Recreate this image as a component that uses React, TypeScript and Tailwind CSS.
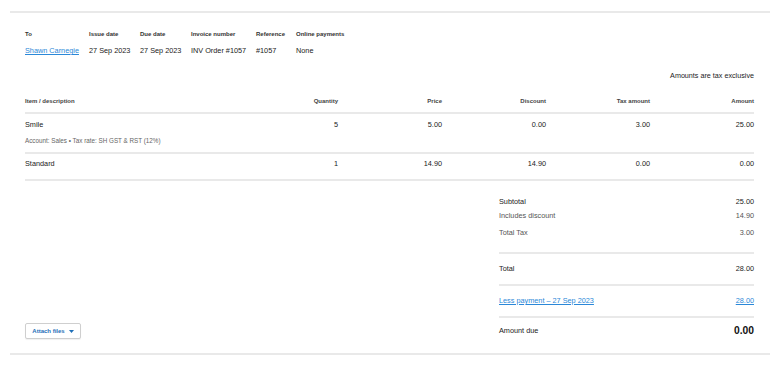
import React from "react";

const Label = ({ children, w }: { children: React.ReactNode; w?: string }) => (
  <div className={`flex flex-col ${w ?? ""}`}>{children}</div>
);

export default function App() {
  const cols = "grid grid-cols-[209px_104px_104px_104px_104px_104px]";
  const rowNum = "text-right";
  return (
    <div className="w-[780px] h-[365px] bg-white px-[10px] pt-[11px] font-['Liberation_Sans',Arial,sans-serif] text-[#222]">
      <div className="border-t-2 border-b-2 border-[#e9e9e9] pl-[15px] pr-[16px] pb-[14px]">
        {/* Header info */}
        <div className="flex pt-[16px]">
          {[
            { l: "To", v: "Shawn Carnegie", w: "w-[64px]", link: true },
            { l: "Issue date", v: "27 Sep 2023", w: "w-[51px]" },
            { l: "Due date", v: "27 Sep 2023", w: "w-[51px]" },
            { l: "Invoice number", v: "INV Order #1057", w: "w-[65px]" },
            { l: "Reference", v: "#1057", w: "w-[40px]" },
            { l: "Online payments", v: "None", w: "" },
          ].map((c) => (
            <Label key={c.l} w={c.w}>
              <div className="h-[10px] leading-[10px] text-[6px] font-bold text-[#333] whitespace-nowrap">{c.l}</div>
              <div
                className={`mt-[7px] h-[10px] leading-[10px] text-[7.3px] whitespace-nowrap ${
                  c.link ? "text-[#2b88d8] underline" : "text-[#222]"
                }`}
              >
                {c.v}
              </div>
            </Label>
          ))}
        </div>

        <div className="mt-[15px] h-[10px] leading-[10px] text-right text-[7.2px] text-[#222]">
          Amounts are tax exclusive
        </div>

        {/* Table */}
        <div className="mt-[15px]">
          <div className={`${cols} h-[18px] pb-[5px] border-b-2 border-[#e9e9e9] text-[6px] font-bold text-[#444] leading-[10px]`}>
            <div>Item / description</div>
            <div className={rowNum}>Quantity</div>
            <div className={rowNum}>Price</div>
            <div className={rowNum}>Discount</div>
            <div className={rowNum}>Tax amount</div>
            <div className={rowNum}>Amount</div>
          </div>
          <div className="pt-[6px] pb-[6px] border-b-2 border-[#e9e9e9]">
            <div className={`${cols} text-[7.3px] leading-[10px]`}>
              <div>Smile</div>
              <div className={rowNum}>5</div>
              <div className={rowNum}>5.00</div>
              <div className={rowNum}>0.00</div>
              <div className={rowNum}>3.00</div>
              <div className={rowNum}>25.00</div>
            </div>
            <div className="mt-[6px] text-[6.3px] leading-[10px] text-[#666] whitespace-nowrap">
              Account: Sales • Tax rate: SH GST &amp; RST (12%)
            </div>
          </div>
          <div className={`${cols} pt-[5px] pb-[10px] border-b-2 border-[#e9e9e9] text-[7.3px] leading-[10px]`}>
            <div>Standard</div>
            <div className={rowNum}>1</div>
            <div className={rowNum}>14.90</div>
            <div className={rowNum}>14.90</div>
            <div className={rowNum}>0.00</div>
            <div className={rowNum}>0.00</div>
          </div>
        </div>

        {/* Bottom section */}
        <div className="mt-[16px] flex items-end justify-between">
          <button className="flex h-[16px] w-[56px] items-center justify-center gap-[4px] rounded-[2px] border border-[#cfcfcf] bg-white text-[6px] font-bold text-[#1f6fb8] shadow-[0_1px_1px_rgba(0,0,0,0.06)]">
            <span>Attach files</span>
            <svg width="5" height="3" viewBox="0 0 5 3">
              <path d="M0 0 L5 0 L2.5 3 Z" fill="#1f6fb8" />
            </svg>
          </button>

          <div className="w-[255px] text-[7.3px] leading-[10px]">
            <div className="pb-[14px] border-b-2 border-[#e9e9e9]">
              <div className="flex justify-between text-[#222]">
                <span>Subtotal</span>
                <span>25.00</span>
              </div>
              <div className="mt-[4px] flex justify-between text-[#555]">
                <span>Includes discount</span>
                <span>14.90</span>
              </div>
              <div className="mt-[7px] flex justify-between text-[#555]">
                <span>Total Tax</span>
                <span>3.00</span>
              </div>
            </div>
            <div className="pt-[10px] pb-[10px] border-b-2 border-[#e9e9e9] flex justify-between">
              <span>Total</span>
              <span>28.00</span>
            </div>
            <div className="pt-[10px] pb-[10px] border-b-2 border-[#e9e9e9] flex justify-between text-[#2b88d8] underline">
              <span>Less payment – 27 Sep 2023</span>
              <span>28.00</span>
            </div>
            <div className="mt-[5px] flex h-[16px] items-center justify-between">
              <span>Amount due</span>
              <span className="text-[10.3px] font-bold text-[#111]">0.00</span>
            </div>
          </div>
        </div>
      </div>
    </div>
  );
}
